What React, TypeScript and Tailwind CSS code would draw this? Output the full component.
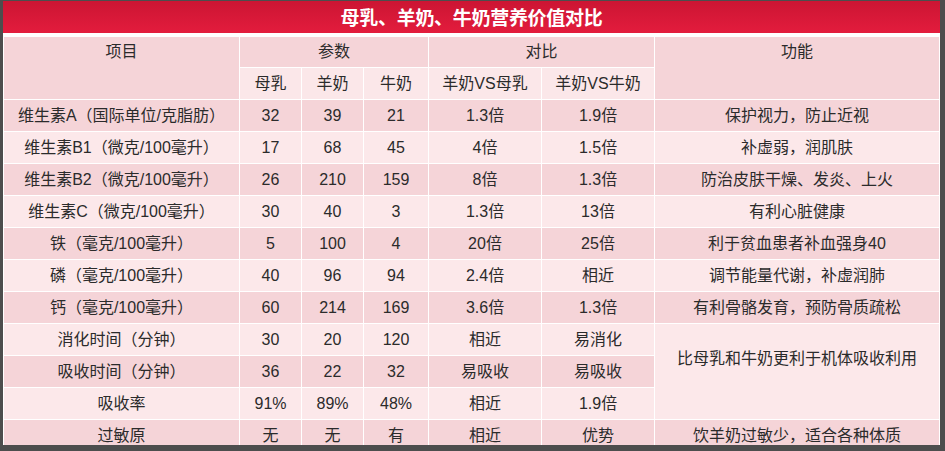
import React from 'react'

type Row = {
    name: string
    mother: string
    goat: string
    cow: string
    vsMother: string
    vsCow: string
    effect?: string
    effectSpan?: number
}

const rows: Row[] = [
    { name: '维生素A（国际单位/克脂肪）', mother: '32', goat: '39', cow: '21', vsMother: '1.3倍', vsCow: '1.9倍', effect: '保护视力，防止近视' },
    { name: '维生素B1（微克/100毫升）', mother: '17', goat: '68', cow: '45', vsMother: '4倍', vsCow: '1.5倍', effect: '补虚弱，润肌肤' },
    { name: '维生素B2（微克/100毫升）', mother: '26', goat: '210', cow: '159', vsMother: '8倍', vsCow: '1.3倍', effect: '防治皮肤干燥、发炎、上火' },
    { name: '维生素C（微克/100毫升）', mother: '30', goat: '40', cow: '3', vsMother: '1.3倍', vsCow: '13倍', effect: '有利心脏健康' },
    { name: '铁（毫克/100毫升）', mother: '5', goat: '100', cow: '4', vsMother: '20倍', vsCow: '25倍', effect: '利于贫血患者补血强身40' },
    { name: '磷（毫克/100毫升）', mother: '40', goat: '96', cow: '94', vsMother: '2.4倍', vsCow: '相近', effect: '调节能量代谢，补虚润肺' },
    { name: '钙（毫克/100毫升）', mother: '60', goat: '214', cow: '169', vsMother: '3.6倍', vsCow: '1.3倍', effect: '有利骨骼发育，预防骨质疏松' },
    { name: '消化时间（分钟）', mother: '30', goat: '20', cow: '120', vsMother: '相近', vsCow: '易消化', effect: '比母乳和牛奶更利于机体吸收利用', effectSpan: 3 },
    { name: '吸收时间（分钟）', mother: '36', goat: '22', cow: '32', vsMother: '易吸收', vsCow: '易吸收' },
    { name: '吸收率', mother: '91%', goat: '89%', cow: '48%', vsMother: '相近', vsCow: '1.9倍' },
    { name: '过敏原', mother: '无', goat: '无', cow: '有', vsMother: '相近', vsCow: '优势', effect: '饮羊奶过敏少，适合各种体质' },
]

const cell = 'border border-white text-center p-0 font-normal whitespace-nowrap'

export default function App() {
    return (
        <div
            className="w-[945px] h-[451px] overflow-hidden bg-[#4d4d4d] pl-[3px] pr-[5px] pt-[1px] pb-[6px] text-[#2b2b2b] text-[16px]"
            style={{ fontFamily: '"Liberation Sans", "Noto Sans CJK SC", sans-serif' }}
        >
            <div className="h-full overflow-hidden bg-white shadow-[inset_2px_0_3px_rgba(0,0,0,0.25)]">
                {/* Title */}
                <div
                    className="h-[32px] bg-gradient-to-b from-[#cc1533] to-[#e31c3d] flex items-center justify-center text-white text-[19px] font-bold tracking-[-0.3px]"
                    style={{ fontFamily: '"Noto Sans CJK SC", sans-serif' }}
                >
                    母乳、羊奶、牛奶营养价值对比
                </div>
                <div className="h-[3px] bg-white" />

                <table className="w-full table-fixed border-collapse">
                    <colgroup>
                        <col className="w-[236px]" />
                        <col className="w-[62px]" />
                        <col className="w-[62px]" />
                        <col className="w-[65px]" />
                        <col className="w-[113px]" />
                        <col className="w-[113px]" />
                        <col />
                    </colgroup>
                    <thead>
                        <tr className="h-[31px]">
                            <th rowSpan={2} className={`${cell} bg-[#f5d4d8] align-top leading-[30px]`}>项目</th>
                            <th colSpan={3} className={`${cell} bg-[#f5d4d8]`}>参数</th>
                            <th colSpan={2} className={`${cell} bg-[#f5d4d8]`}>对比</th>
                            <th rowSpan={2} className={`${cell} bg-[#f5d4d8] align-top leading-[30px]`}>功能</th>
                        </tr>
                        <tr className="h-[32px]">
                            <th className={`${cell} bg-[#fbe7e9]`}>母乳</th>
                            <th className={`${cell} bg-[#fbe7e9]`}>羊奶</th>
                            <th className={`${cell} bg-[#fbe7e9]`}>牛奶</th>
                            <th className={`${cell} bg-[#fbe7e9]`}>羊奶VS母乳</th>
                            <th className={`${cell} bg-[#fbe7e9]`}>羊奶VS牛奶</th>
                        </tr>
                    </thead>
                    <tbody>
                        {rows.map((r, i) => {
                            const bg = i % 2 === 0 ? 'bg-[#f5d4d8]' : 'bg-[#fce8ea]'
                            return (
                                <tr key={i} className="h-[32px]">
                                    <td className={`${cell} ${bg}`}>{r.name}</td>
                                    <td className={`${cell} ${bg}`}>{r.mother}</td>
                                    <td className={`${cell} ${bg}`}>{r.goat}</td>
                                    <td className={`${cell} ${bg}`}>{r.cow}</td>
                                    <td className={`${cell} ${bg}`}>{r.vsMother}</td>
                                    <td className={`${cell} ${bg}`}>{r.vsCow}</td>
                                    {r.effect && (
                                        r.effectSpan ? (
                                            <td rowSpan={r.effectSpan} className={`${cell} bg-[#fce8ea] pb-[26px]`}>{r.effect}</td>
                                        ) : (
                                            <td className={`${cell} ${bg}`}>{r.effect}</td>
                                        )
                                    )}
                                </tr>
                            )
                        })}
                    </tbody>
                </table>
            </div>
        </div>
    )
}
